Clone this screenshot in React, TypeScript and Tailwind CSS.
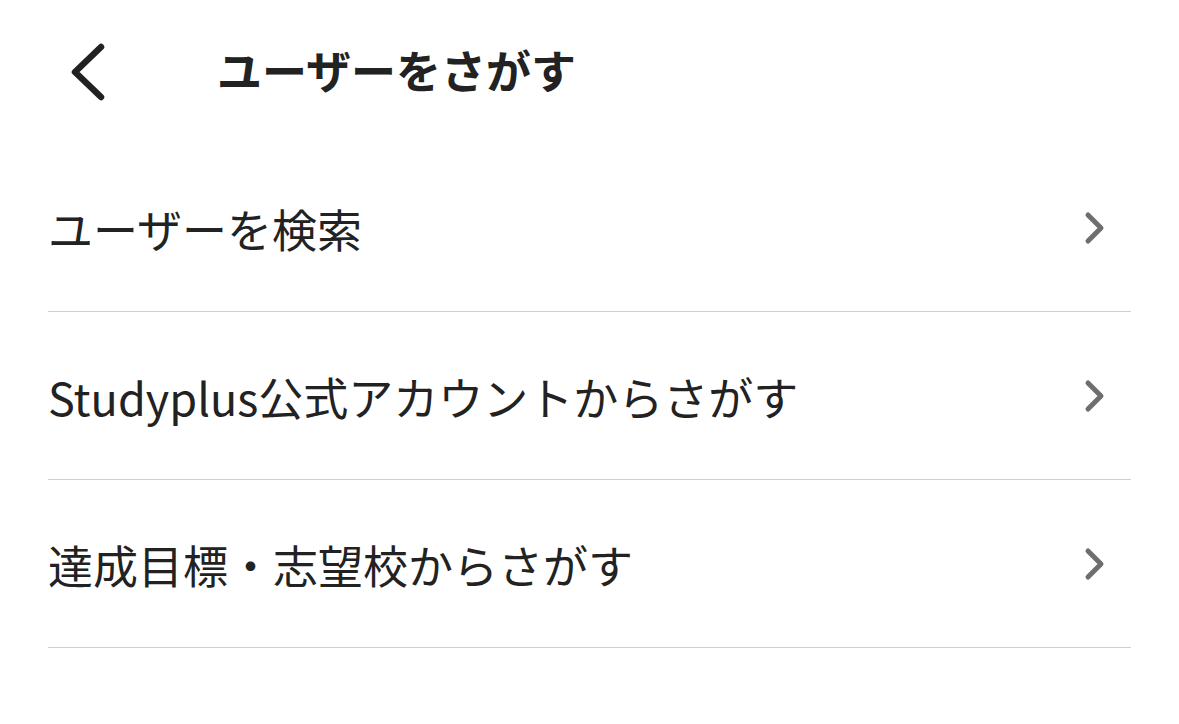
import React from "react";

const font = { fontFamily: '"Noto Sans CJK JP", "Noto Sans", sans-serif' };

function Chevron() {
  return (
    <svg width="22" height="34" viewBox="0 0 22 34" className="mr-[25px]">
      <path d="M4 4 L17 17 L4 30" fill="none" stroke="#6e6e6e" strokeWidth="5" strokeLinecap="round" strokeLinejoin="round" />
    </svg>
  );
}

const items = ["ユーザーを検索", "Studyplus公式アカウントからさがす", "達成目標・志望校からさがす"];

export default function App() {
  return (
    <div className="w-[1179px] h-[724px] bg-white text-[#222222]" style={font}>
      <div className="h-[144px] flex items-center">
        <svg width="44" height="60" viewBox="0 0 44 60" className="ml-[65px]">
          <path d="M36 5 L10 30 L36 55" fill="none" stroke="#222222" strokeWidth="6.5" strokeLinecap="round" strokeLinejoin="round" />
        </svg>
        <div className="ml-[108px] mb-[5px] text-[45px] font-bold leading-none">ユーザーをさがす</div>
      </div>
      <div className="mx-[48px]">
        {items.map((t) => (
          <div key={t} className="h-[168px] flex items-center justify-between border-b border-[#cfcfcf]">
            <span className="text-[45px] leading-none mt-[2px]">{t}</span>
            <Chevron />
          </div>
        ))}
      </div>
    </div>
  );
}
